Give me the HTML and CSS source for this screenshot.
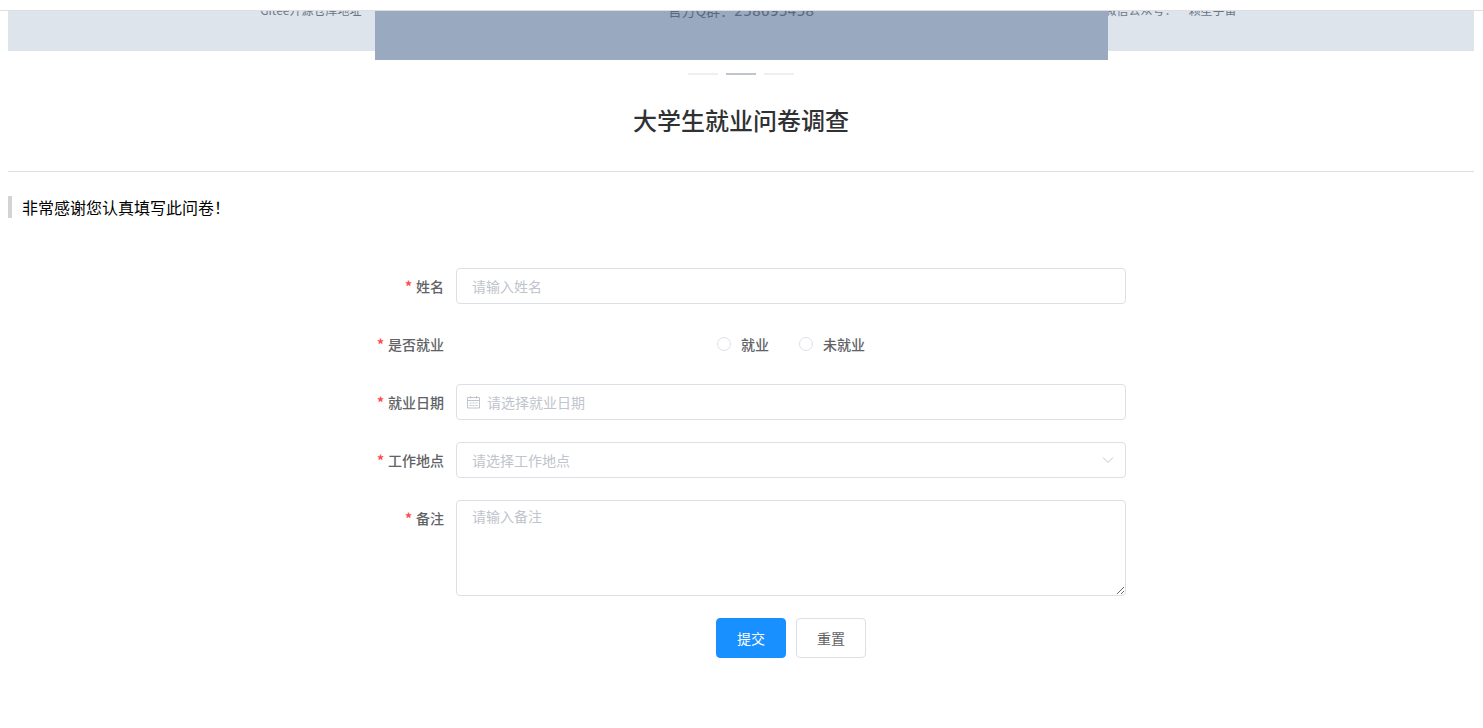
FILE: index.html
```html
<!DOCTYPE html>
<html lang="zh-CN">
<head>
<meta charset="utf-8">
<title>大学生就业问卷调查</title>
<link rel="stylesheet" href="styles.css">
</head>
<body>
<header class="topbar"></header>
<main class="page">
  <section class="carousel">
    <div class="slide slide-left"><span class="slide-text">Gitee开源仓库地址</span></div>
    <div class="slide slide-active"><span class="slide-text">官方Q群：<span class="number">258695458</span></span></div>
    <div class="slide slide-right"><span class="slide-text">微信公众号：一颗星宇宙</span></div>
  </section>
  <nav class="indicators" aria-label="轮播">
    <button class="indicator" type="button" aria-label="1"></button>
    <button class="indicator current" type="button" aria-label="2"></button>
    <button class="indicator" type="button" aria-label="3"></button>
  </nav>
  <h1 class="title">大学生就业问卷调查</h1>
  <hr class="divider">
  <p class="intro">非常感谢您认真填写此问卷！</p>
  <form class="form">
    <div class="row">
      <label class="label" for="name">姓名</label>
      <input class="control" id="name" type="text" placeholder="请输入姓名">
    </div>
    <div class="row" role="radiogroup" aria-labelledby="employed">
      <span class="label" id="employed">是否就业</span>
      <div class="radios">
        <label class="radio"><input class="radio-input" type="radio" name="employed">就业</label>
        <label class="radio"><input class="radio-input" type="radio" name="employed">未就业</label>
      </div>
    </div>
    <div class="row">
      <label class="label" for="date">就业日期</label>
      <div class="field">
        <svg class="icon icon-date" viewBox="0 0 14 14" fill="none" stroke="currentColor" aria-hidden="true">
          <path d="M1.500 2.500h12v10.500h-12zM1.500 5.500h12M4.500 1v2.500M10.500 1v2.500"/>
          <path d="M3.500 8h2M6.500 8h2M9.500 8h2M3.500 10.500h2M6.500 10.500h2M9.500 10.500h2"/>
        </svg>
        <input class="control control-date" id="date" type="text" placeholder="请选择就业日期">
      </div>
    </div>
    <div class="row">
      <label class="label" for="place">工作地点</label>
      <div class="field">
        <select class="control control-select" id="place"><option>请选择工作地点</option></select>
        <svg class="icon icon-arrow" viewBox="0 0 14 14" fill="none" stroke="currentColor" aria-hidden="true"><path d="M2 4.500l5 5 5-5"/></svg>
      </div>
    </div>
    <div class="row">
      <label class="label" for="note">备注</label>
      <textarea class="control control-area" id="note" placeholder="请输入备注"></textarea>
    </div>
    <div class="actions">
      <button class="button primary" type="submit">提交</button>
      <button class="button" type="reset">重置</button>
    </div>
  </form>
</main>
<footer class="footer"></footer>
</body>
</html>
```
FILE: styles.css
```css
* { box-sizing: border-box; }
body {
  margin: 0;
  min-height: 100vh;
  display: flex;
  flex-direction: column;
  overflow: hidden;
  font-family: "Noto Sans CJK SC", sans-serif;
  font-size: 14px;
  color: #606266;
  background: #fff;
}
.topbar { height: 11px; border-bottom: 1px solid #dcdfe0; }
.page { flex: 1; padding: 0 9px 0 8px; }

/* Carousel */
.carousel {
  display: grid;
  grid-template-columns: 1fr 2fr 1fr;
  align-items: start;
  overflow: hidden;
}
.slide { display: flex; height: 40px; overflow: hidden; background: #dde4ec; color: #6a7684; }
.slide-text { margin-top: -9px; font-size: 12px; line-height: 16px; white-space: nowrap; }
.slide-left { justify-content: flex-end; padding-right: 13px; }
.slide-active { height: 49px; justify-content: center; background: #99a9bf; color: #5b6980; }
.slide-active .slide-text { font-size: 14px; }
.number { font-family: "DejaVu Sans", sans-serif; }
.slide-right .slide-text { margin-left: -3px; }
.indicators { display: flex; justify-content: center; gap: 8px; padding: 13px 0 0; }
.indicator { width: 30px; height: 2px; padding: 0; border: 0; background: #efeff1; }
.indicator.current { background: #c0c4cc; }

.title { margin: 27px 0 0; font-size: 24px; line-height: 36px; font-weight: 500; text-align: center; color: #303133; }
.divider { height: 1px; margin: 33px 0 24px; border: 0; background: #dcdfe6; }
.intro { margin: 0; padding-left: 10px; border-left: 4px solid #d3d3d3; font-size: 16px; line-height: 22px; color: #000; }

/* Form */
.form { display: flex; flex-direction: column; gap: 22px; max-width: 770px; margin: 50px auto 0; }
.row { display: grid; grid-template-columns: 100px 1fr; min-height: 36px; }
.label { padding-right: 12px; line-height: 36px; text-align: right; font-weight: 500; }
.label::before { content: "*"; margin-right: 4px; font-weight: 700; color: #ff4949; }
.field { position: relative; }
.control {
  display: block;
  width: 100%;
  height: 36px;
  padding: 0 15px;
  border: 1px solid #dcdfe6;
  border-radius: 4px;
  outline: 0;
  background: #fff;
  font: inherit;
  color: #606266;
}
.control::placeholder { color: #c0c4cc; opacity: 1; }
.control-date { padding-left: 30px; }
.control-select { appearance: none; color: #c0c4cc; }
.control-area { height: 96px; padding: 5px 15px; line-height: 21px; resize: vertical; }
.icon { position: absolute; top: 11px; width: 14px; height: 14px; color: #c0c4cc; }
.icon-date { left: 10px; }
.icon-arrow { right: 11px; }
.radios { display: flex; align-items: center; justify-content: center; gap: 30px; }
.radio { display: flex; align-items: center; gap: 10px; font-weight: 500; }
.radio-input { appearance: none; width: 14px; height: 14px; margin: 0; border: 1px solid #dcdfe6; border-radius: 50%; background: #fff; }
.radio-input:checked { border: 4px solid #1890ff; }
.actions { display: flex; justify-content: center; gap: 10px; padding-left: 100px; }
.button {
  height: 40px;
  padding: 0 20px;
  border: 1px solid #dcdfe6;
  border-radius: 4px;
  background: #fff;
  font: inherit;
  color: #606266;
}
.primary { border-color: #1890ff; background: #1890ff; color: #fff; }
.footer { height: 0; margin: 0 80px; box-shadow: 0 0 36px 2px rgba(0, 0, 0, 0.04); }
```
